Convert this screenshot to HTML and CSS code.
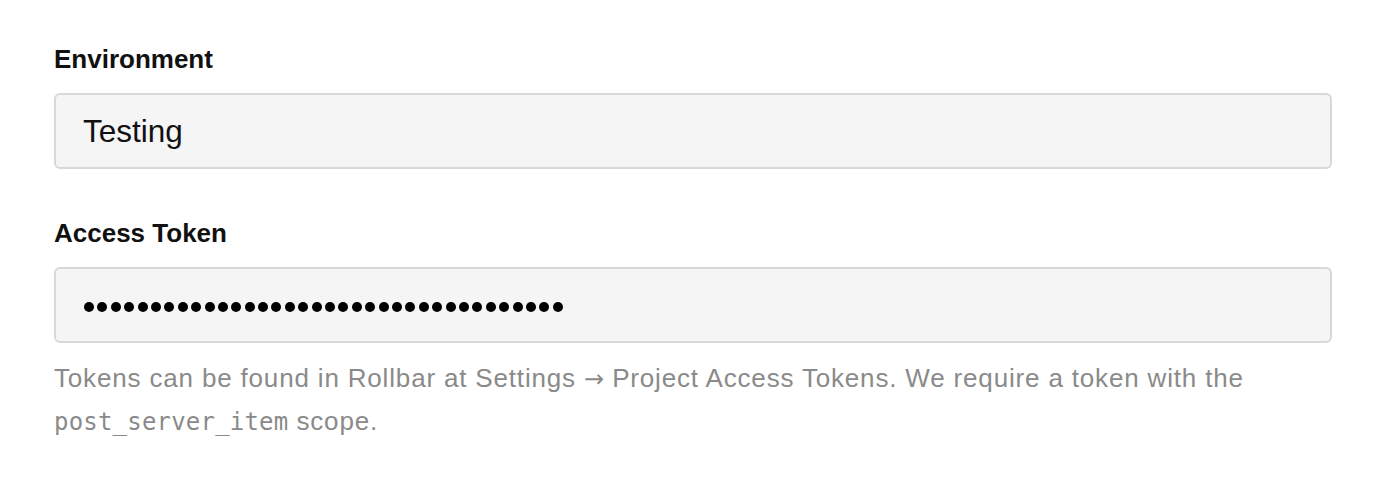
FILE: index.html
```html
<!DOCTYPE html>
<html>
<head>
<meta charset="utf-8">
<link rel="stylesheet" href="styles.css">
</head>
<body>
<form class="form">
  <div class="field">
    <label class="label">Environment</label>
    <div class="input"><span class="value">Testing</span></div>
  </div>
  <div class="field">
    <label class="label">Access Token</label>
    <div class="input">
      <span class="dots">
        <i></i><i></i><i></i><i></i><i></i><i></i><i></i><i></i><i></i><i></i><i></i><i></i><i></i><i></i><i></i><i></i><i></i><i></i><i></i><i></i><i></i><i></i><i></i><i></i><i></i><i></i><i></i><i></i><i></i><i></i><i></i><i></i><i></i><i></i><i></i><i></i>
      </span>
    </div>
    <p class="help">Tokens can be found in Rollbar at Settings <span class="arrow">→</span> Project Access Tokens. We require a token with the <code class="code">post_server_item</code> scope.</p>
  </div>
</form>
</body>
</html>
```

FILE: styles.css
```css
html, body {
  margin: 0;
  padding: 0;
  background: #fff;
}
body {
  font-family: "Liberation Sans", Arial, sans-serif;
  color: #111;
}
.form {
  width: 1278px;
  padding: 43px 0 0 54px;
  display: flex;
  flex-direction: column;
  gap: 48px;
}
.field {
  display: flex;
  flex-direction: column;
}
.label {
  font-size: 26px;
  font-weight: bold;
  line-height: 32px;
  margin-bottom: 18px;
}
.input {
  box-sizing: border-box;
  height: 76px;
  border: 2px solid #d8d8d8;
  border-radius: 6px;
  background: #f5f5f5;
  display: flex;
  align-items: center;
  padding-left: 27px;
}
.value {
  font-size: 31.5px;
  line-height: 1;
  color: #111;
  position: relative;
  top: 1px;
}
.dots {
  display: flex;
  gap: 3.4px;
  position: relative;
  top: 2px;
  padding-left: 1px;
}
.dots i {
  display: block;
  width: 10px;
  height: 10px;
  border-radius: 50%;
  background: #000;
}
.help {
  margin: 14px 0 0;
  font-size: 26px;
  line-height: 42px;
  letter-spacing: 0.83px;
  color: #8a8a8a;
}
.arrow {
  font-family: "DejaVu Sans", sans-serif;
  font-size: 24px;
  letter-spacing: 0;
}
.code {
  font-family: "DejaVu Sans Mono", "Liberation Mono", monospace;
  font-size: 24px;
  color: #8a8a8a;
  letter-spacing: 0.2px;
}
```
